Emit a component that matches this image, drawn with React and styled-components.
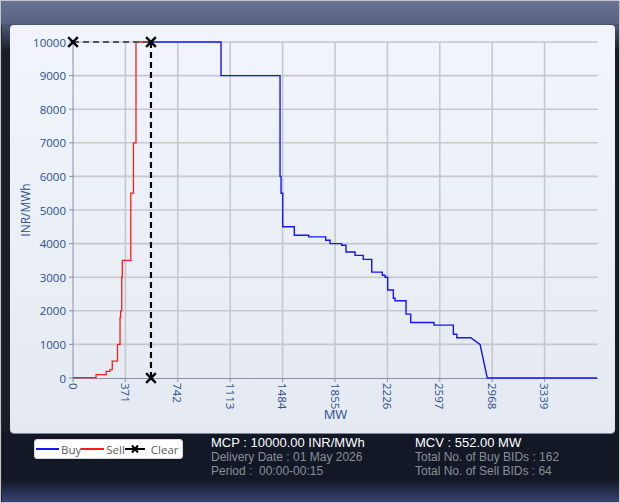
import styled, { createGlobalStyle } from 'styled-components';

const GlobalStyle = createGlobalStyle`
  html, body {
    margin: 0;
    padding: 0;
    background: #ffffff;
  }
  body {
    font-family: "Open Sans", "Noto Sans", sans-serif;
  }
`;

// plot scale, in page pixels
const X0 = 73;
const X1 = 597;
const Y0 = 378;
const Y1 = 42;
const MW_MAX = 3710;
const PRICE_MAX = 10000;

const sx = (mw) => X0 + (mw * (X1 - X0)) / MW_MAX;
const sy = (p) => Y0 - (p * (Y0 - Y1)) / PRICE_MAX;

const MCV = 552;
const MCP = 10000;

const xTicks = [0, 371, 742, 1113, 1484, 1855, 2226, 2597, 2968, 3339];
const yTicks = [0, 1000, 2000, 3000, 4000, 5000, 6000, 7000, 8000, 9000, 10000];

// [mw, price, diagonal]
const sellBids = [
  [0, 10], [163, 100], [235, 200], [262, 250], [278, 500], [315, 1000],
  [333, 1800], [337, 2000], [345, 3000], [349, 3500], [409, 5500],
  [428, 7000], [446, 10000], [552, 10000],
];

const buyBids = [
  [552, 10000], [1048, 9000], [1466, 6000], [1473, 5500], [1485, 4500],
  [1567, 4250], [1669, 4200], [1789, 4100], [1820, 4000], [1902, 3950],
  [1933, 3750], [1997, 3650], [2055, 3530], [2115, 3150], [2190, 3060],
  [2209, 3000], [2228, 2620], [2268, 2375], [2280, 2300], [2358, 1900],
  [2391, 1650], [2556, 1575], [2693, 1300], [2717, 1200], [2816, 1200],
  [2882, 1000, true], [2933, 0, true], [MW_MAX, 0],
];

const stepPath = (pts) =>
  pts.reduce((d, [m, p, diag], i) => {
    if (i === 0) return `M${sx(m)} ${sy(p)}`;
    if (diag) return `${d} L${sx(m)} ${sy(p)}`;
    return `${d} H${sx(m)} V${sy(p)}`;
  }, '');

const Window = styled.div`
  width: 620px;
  height: 503px;
  box-sizing: border-box;
  border: 1px solid #c2c5cc;
  display: flex;
  flex-direction: column;
  overflow: hidden;
`;

const TitleBar = styled.div`
  height: 23px;
  flex: none;
  background: linear-gradient(to bottom, #6a7392, #58617f);
  border-bottom: 1px solid #4a536f;
`;

const Body = styled.div`
  flex: 1;
  display: flex;
  flex-direction: column;
  padding: 0 4px 0 8px;
  border-left: 1px solid #24272e;
  background: linear-gradient(
    to bottom,
    #4f5877 0px,
    #1b1d24 26px,
    #1b1d24 406px,
    #121826 406px,
    #121826 455px,
    #3a4474 100%
  );
`;

const ChartPanel = styled.div`
  height: 408px;
  flex: none;
  border-radius: 4px;
  background: linear-gradient(to bottom, #f1f5fb, #e5eaf2);
  box-shadow: 0 1px 0 #7f879a;
  overflow: hidden;

  svg {
    display: block;
  }
`;

const AxisText = styled.text`
  font-family: "Open Sans", "Noto Sans", sans-serif;
  font-size: ${(p) => p.$size || 11.5}px;
  fill: #2b4e8c;
`;

const Footer = styled.div`
  display: flex;
  align-items: flex-start;
  padding: 2px 0 0 24px;
`;

const Legend = styled.div`
  margin-top: 4px;
  width: 149px;
  height: 20px;
  box-sizing: border-box;
  background: #ffffff;
  border: 1px solid #d7d9de;
  border-radius: 3px;
  display: flex;
  align-items: center;
  padding-left: 1px;
  font-size: 11.5px;
  color: #5c5c5c;
`;

const LegendItem = styled.div`
  display: flex;
  align-items: center;
  gap: ${(p) => p.$gap ?? 2}px;
`;

const Swatch = styled.span`
  display: block;
  width: ${(p) => p.$width || 23}px;
  height: 2px;
  background: ${(p) => p.$color};
`;

const InfoBlock = styled.div`
  margin-left: ${(p) => p.$offset || 0}px;
  width: ${(p) => p.$width}px;
  display: flex;
  flex-direction: column;
  font-family: "Liberation Sans", Arial, sans-serif;
`;

const InfoTitle = styled.div`
  font-size: 13px;
  line-height: 15px;
  color: #ffffff;
  white-space: nowrap;
`;

const InfoLine = styled.div`
  font-size: 12px;
  line-height: 14.3px;
  color: #8b8f98;
  white-space: nowrap;
`;

const Cross = ({ x, y, size = 4 }) => (
  <g stroke="#000" strokeWidth="2.4" strokeLinecap="square">
    <line x1={x - size} y1={y - size} x2={x + size} y2={y + size} />
    <line x1={x - size} y1={y + size} x2={x + size} y2={y - size} />
  </g>
);

const Chart = () => (
  <svg width="605" height="408" viewBox="10 25 605 408">
    {/* grid */}
    <g stroke="#c6c8cc" strokeWidth="1.6">
      {yTicks.slice(1).map((p) => (
        <line key={p} x1={X0} y1={sy(p)} x2={X1 + 1} y2={sy(p)} />
      ))}
      {xTicks.slice(1).map((m) => (
        <line key={m} x1={sx(m)} y1={Y1} x2={sx(m)} y2={Y0} />
      ))}
    </g>

    {/* axes and ticks */}
    <g stroke="#8690ab" strokeWidth="1">
      <line x1={X0} y1={Y1} x2={X0} y2={Y0} />
      <line x1={X0} y1={Y0 + 0.5} x2={X1 + 1} y2={Y0 + 0.5} />
      {yTicks.map((p) => (
        <line key={p} x1={X0 - 4} y1={sy(p)} x2={X0} y2={sy(p)} />
      ))}
      {xTicks.map((m) => (
        <line key={m} x1={sx(m)} y1={Y0} x2={sx(m)} y2={Y0 + 4} />
      ))}
    </g>

    {yTicks.map((p) => (
      <AxisText key={p} x={X0 - 7} y={sy(p)} textAnchor="end" dominantBaseline="central">
        {p}
      </AxisText>
    ))}
    {xTicks.map((m) => (
      <AxisText
        key={m}
        transform={`translate(${sx(m)} ${Y0 + 5}) rotate(90)`}
        dominantBaseline="central"
      >
        {m}
      </AxisText>
    ))}
    <AxisText x="335.5" y="419" textAnchor="middle" $size={13}>
      MW
    </AxisText>
    <AxisText
      transform="translate(25 210) rotate(-90)"
      textAnchor="middle"
      dominantBaseline="central"
      $size={12}
    >
      INR/MWh
    </AxisText>

    {/* curves */}
    <path d={stepPath(buyBids)} fill="none" stroke="#1414ff" strokeWidth="1.4" />
    <path d={stepPath(sellBids)} fill="none" stroke="#ff1a1a" strokeWidth="1.3" />

    {/* clearing point */}
    <g stroke="#000" strokeWidth="2.2" strokeDasharray="6 4" fill="none">
      <line x1={X0} y1={sy(MCP)} x2={sx(MCV)} y2={sy(MCP)} stroke="#555" strokeWidth="2" />
      <line x1={sx(MCV)} y1={sy(MCP)} x2={sx(MCV)} y2={Y0} />
    </g>
    <Cross x={X0} y={sy(MCP)} />
    <Cross x={sx(MCV)} y={sy(MCP)} />
    <Cross x={sx(MCV)} y={Y0} />
  </svg>
);

const ClearSwatch = () => (
  <svg width="20" height="10" viewBox="0 0 20 10">
    <line x1="0" y1="5" x2="20" y2="5" stroke="#000" strokeWidth="2" />
    <g stroke="#000" strokeWidth="2">
      <line x1="7" y1="1.5" x2="13" y2="8.5" />
      <line x1="7" y1="8.5" x2="13" y2="1.5" />
    </g>
  </svg>
);

export default function App() {
  return (
    <>
      <GlobalStyle />
      <Window>
        <TitleBar />
        <Body>
          <ChartPanel>
            <Chart />
          </ChartPanel>
          <Footer>
            <Legend>
              <LegendItem>
                <Swatch $color="#1414ff" />
                <span>Buy</span>
              </LegendItem>
              <LegendItem>
                <Swatch $color="#ff1a1a" />
                <span>Sell</span>
              </LegendItem>
              <LegendItem $gap={6}>
                <ClearSwatch />
                <span>Clear</span>
              </LegendItem>
            </Legend>
            <InfoBlock $offset={28} $width={204}>
              <InfoTitle>MCP : 10000.00 INR/MWh</InfoTitle>
              <InfoLine>Delivery Date : 01 May 2026</InfoLine>
              <InfoLine>Period :&nbsp; 00:00-00:15</InfoLine>
            </InfoBlock>
            <InfoBlock $width={190}>
              <InfoTitle>MCV : 552.00 MW</InfoTitle>
              <InfoLine>Total No. of Buy BIDs : 162</InfoLine>
              <InfoLine>Total No. of Sell BIDs : 64</InfoLine>
            </InfoBlock>
          </Footer>
        </Body>
      </Window>
    </>
  );
}
